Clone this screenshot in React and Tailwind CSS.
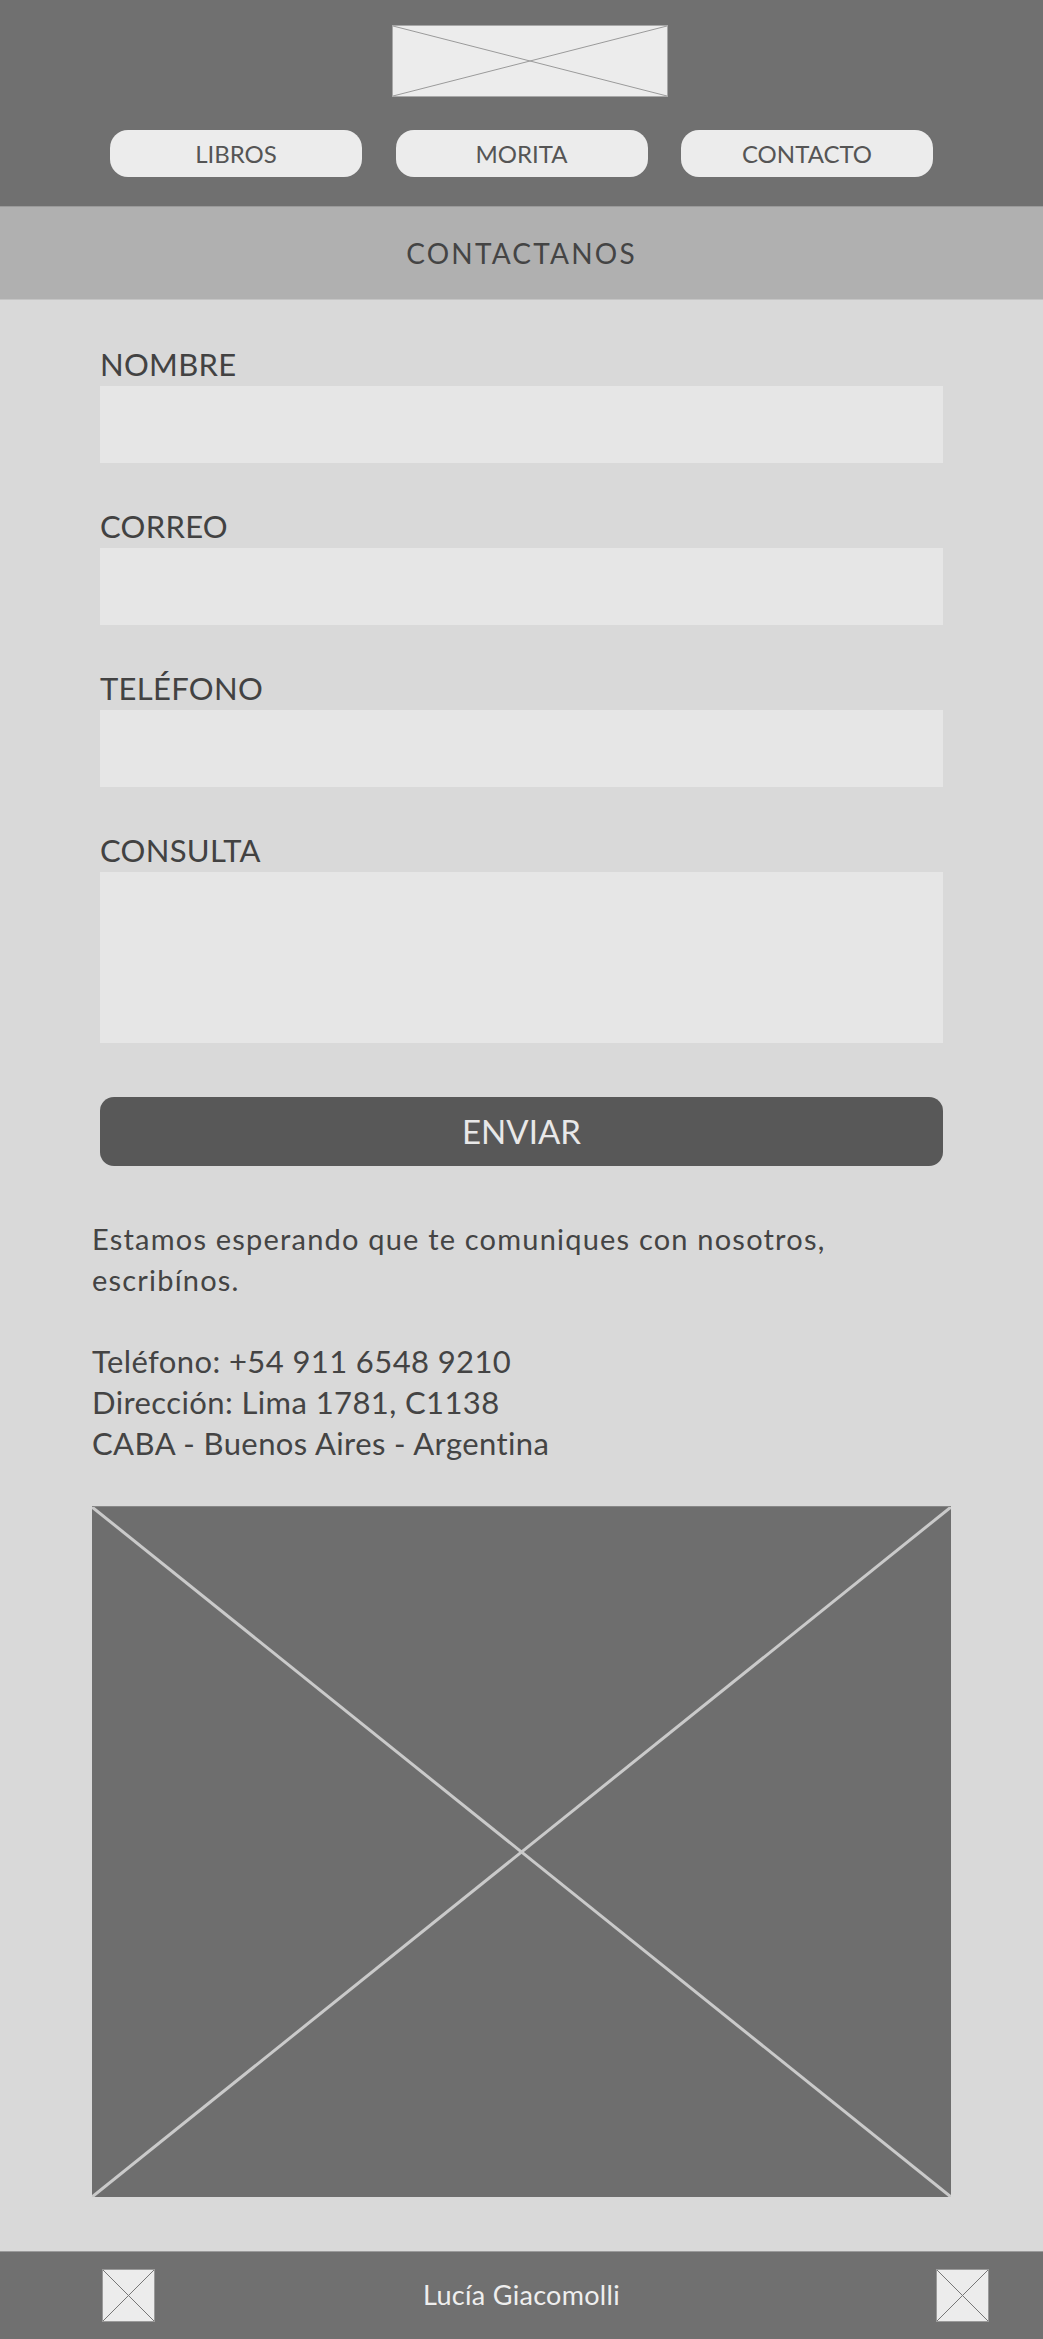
import React from 'react'

const Placeholder = ({ className, line, width = 1 }) => (
  <svg className={className} viewBox="0 0 100 100" preserveAspectRatio="none">
    <line x1="0" y1="0" x2="100" y2="100" stroke={line} strokeWidth={width} vectorEffect="non-scaling-stroke" />
    <line x1="100" y1="0" x2="0" y2="100" stroke={line} strokeWidth={width} vectorEffect="non-scaling-stroke" />
  </svg>
)

const Field = ({ label, tall }) => (
  <div className="flex flex-col">
    <label className="text-[31px] leading-[40px] text-[#424242] tracking-[0.3px]">{label}</label>
    {tall ? (
      <textarea className="mt-[2px] h-[171px] w-full bg-[#e6e6e6] resize-none outline-none" />
    ) : (
      <input className="mt-[2px] h-[77px] w-full bg-[#e6e6e6] outline-none" />
    )}
  </div>
)

const App = () => {
  return (
    <div className="min-h-[2339px] bg-[#d9d9d9] flex flex-col" style={{ fontFamily: 'Lato, "Open Sans", sans-serif' }}>
      <header className="h-[206px] bg-[#707070] flex flex-col items-center pt-[25px]">
        <div className="ml-[17px] w-[276px] h-[72px] bg-[#ececec] border border-[#a8a8a8]">
          <Placeholder className="w-full h-full" line="#9a9a9a" />
        </div>
        <nav className="mt-[33px] w-full px-[110px] flex justify-between">
          {['LIBROS', 'MORITA', 'CONTACTO'].map((item) => (
            <a key={item} className="w-[252px] h-[47px] rounded-[18px] bg-[#ececec] flex items-center justify-center text-[24px] text-[#555]">
              {item}
            </a>
          ))}
        </nav>
      </header>

      <div className="h-[94px] bg-[#b0b0b0] border-t border-[#9a9a9a] border-b border-b-[#c4c4c4] flex items-center justify-center">
        <h1 className="text-[28px] tracking-[2.2px] text-[#444]">CONTACTANOS</h1>
      </div>

      <form className="px-[100px] pt-[44px] flex flex-col gap-[43px]">
        <Field label="NOMBRE" />
        <Field label="CORREO" />
        <Field label="TELÉFONO" />
        <Field label="CONSULTA" tall />
      </form>

      <div className="px-[100px] mt-[54px]">
        <button className="w-full h-[69px] rounded-[14px] bg-[#585858] text-[#e8e8e8] text-[33px]">ENVIAR</button>
      </div>

      <div className="px-[92px] mt-[52px] text-[#444] leading-[41px]">
        <p className="text-[29px] tracking-[1.2px]">
          Estamos esperando que te comuniques con nosotros,
          <br />
          escribínos.
        </p>
        <p className="text-[31px] tracking-[0.4px] mt-[41px]">
          Teléfono: +54 911 6548 9210
          <br />
          Dirección: Lima 1781, C1138
          <br />
          CABA - Buenos Aires - Argentina
        </p>
      </div>

      <div className="px-[92px] mt-[42px]">
        <div className="h-[691px] bg-[#6e6e6e] border-t border-[#888]">
          <svg className="w-full h-full" viewBox="0 0 859 690" preserveAspectRatio="none">
            <line x1="0" y1="0" x2="859" y2="690" stroke="#cacaca" strokeWidth="3" />
            <line x1="859" y1="0" x2="0" y2="690" stroke="#cacaca" strokeWidth="3" />
          </svg>
        </div>
      </div>

      <footer className="mt-auto h-[88px] bg-[#707070] border-t border-[#9a9a9a] grid grid-cols-[1fr_auto_1fr] items-center">
        <div className="pl-[102px]">
          <div className="w-[53px] h-[53px] bg-[#ececec] border border-[#9a9a9a]">
            <Placeholder className="w-full h-full" line="#777" />
          </div>
        </div>
        <span className="text-[27px] tracking-[0.3px] text-[#eee]">Lucía Giacomolli</span>
        <div className="pr-[54px] flex justify-end">
          <div className="w-[53px] h-[53px] bg-[#ececec] border border-[#9a9a9a]">
            <Placeholder className="w-full h-full" line="#777" />
          </div>
        </div>
      </footer>
    </div>
  )
}

export default App
